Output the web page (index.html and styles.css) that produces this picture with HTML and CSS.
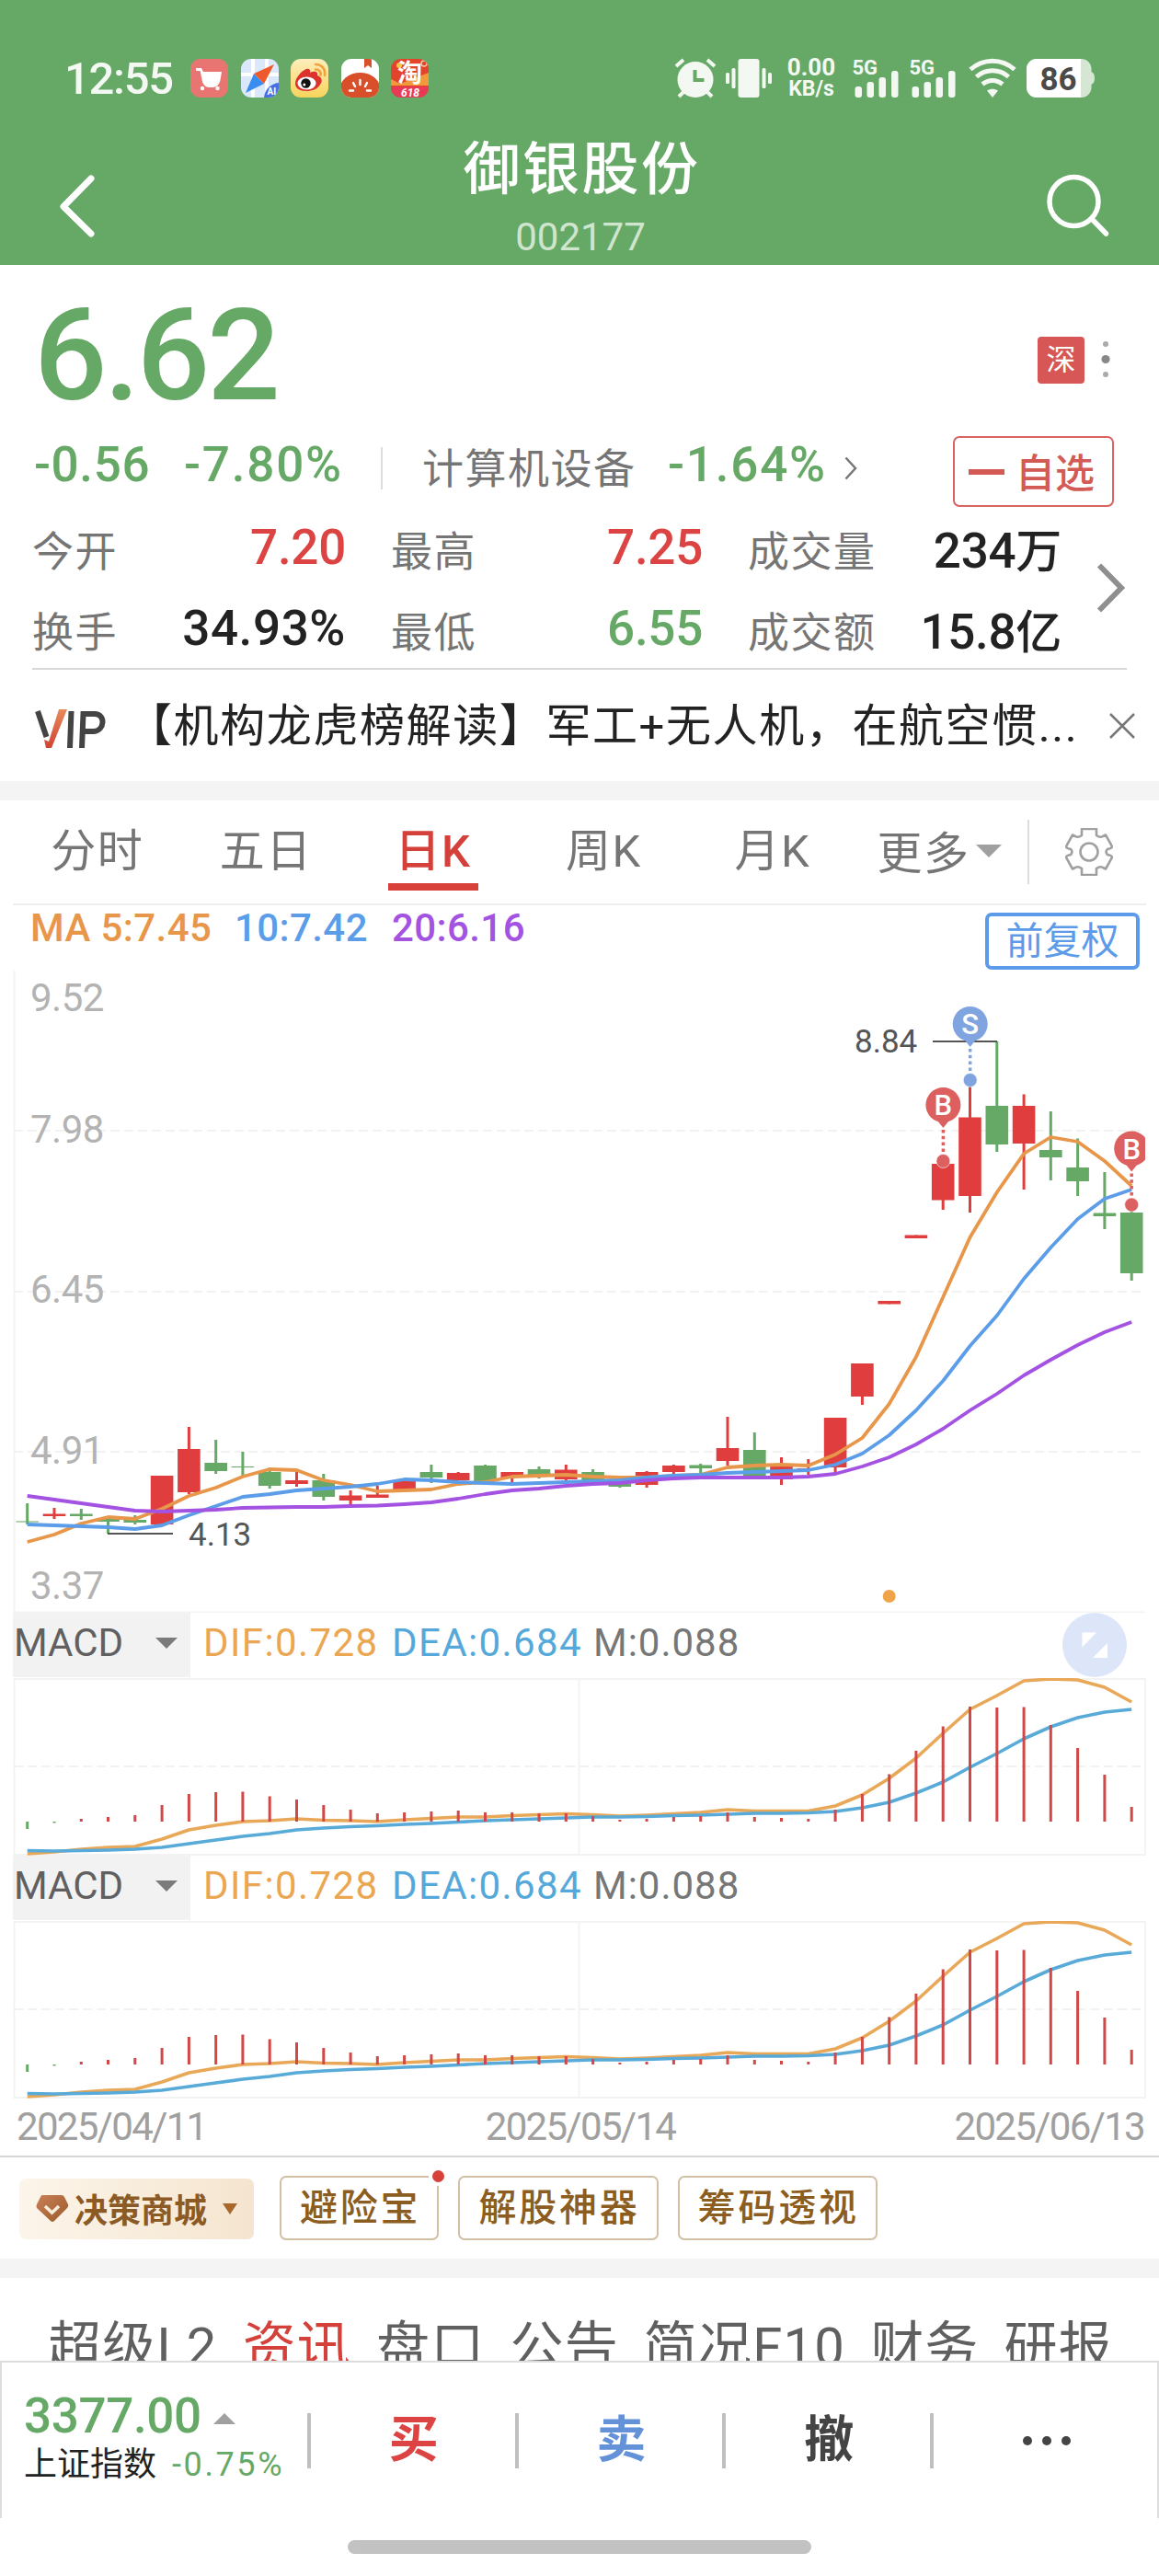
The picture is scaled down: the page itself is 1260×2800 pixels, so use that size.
FILE: index.html
```html
<!DOCTYPE html>
<html lang="zh-CN">
<head>
    <meta charset="UTF-8">
    <meta name="viewport" content="width=device-width, initial-scale=1.0">
    <title>御银股份 002177</title>
    <link rel="stylesheet" href="styles.css">
</head>
<body>

    <header class="header">
        <div class="status-bar">
            <span class="time">12:55</span>
            <div class="app-icons">
                <svg viewBox="0 0 41 42">
                    <rect width="41" height="42" rx="11" fill="#e87572"/>
                    <path d="M6 10h6l2 4h20l-1.500 9c-1 5-4 7.500-8 8h-5c-4-1-6.500-4-7-9l-2-9h-4.500z" fill="#fff"/>
                    <circle cx="13" cy="32" r="2.200" fill="#fff"/>
                    <circle cx="29.500" cy="32" r="2.200" fill="#fff"/>
                </svg>
                <svg viewBox="0 0 41 42">
                    <clipPath id="round"><rect width="41" height="42" rx="11"/></clipPath>
                    <g clip-path="url(#round)">
                        <rect width="41" height="42" fill="#dbe7fb"/>
                        <path d="M13 0v42M28 0v42M0 17h41" stroke="#fff" stroke-width="4"/>
                        <path d="M41 26v16H25c1-9 7-15 16-16z" fill="#4a6fe3"/>
                        <path d="M5 37l9-21 11 11z" fill="#3a8df0"/>
                        <path d="M36 6L14 16l11 11z" fill="#ee5a2b"/>
                    </g>
                    <text x="28.500" y="38.500" class="ai">AI</text>
                </svg>
                <svg viewBox="0 0 41 42">
                    <defs><linearGradient id="wb" x2="0" y2="1"><stop stop-color="#fdeebc"/><stop offset="1" stop-color="#f8d45c"/></linearGradient></defs>
                    <rect width="41" height="42" rx="11" fill="url(#wb)"/>
                    <path d="M5 27c0-7 7-14 12-16 3-1 5 1 4 4 4-2 9-2 8 3 5 2 6 6 3 10-3 5-9 7-15 7-7 0-12-3-12-8z" fill="#dc322d"/>
                    <ellipse cx="17.500" cy="26.500" rx="10" ry="7" fill="#fff"/>
                    <circle cx="16.500" cy="26.500" r="5.200" fill="#111"/>
                    <circle cx="14.800" cy="28" r="1.500" fill="#fff"/>
                    <path d="M27 6c7 0 11 5 10 12M27 11.500c4 0 6 2.500 5.500 6" fill="none" stroke="#f0a33c" stroke-width="2.600" stroke-linecap="round"/>
                </svg>
                <svg viewBox="0 0 41 42">
                    <g clip-path="url(#round)">
                        <rect width="41" height="42" fill="#fff"/>
                        <path d="M25 0h8v10l-4-3-4 3z" fill="#d9502e"/>
                        <ellipse cx="20.500" cy="33" rx="22" ry="18" fill="#d94f2a"/>
                        <path d="M20.500 23v5M13 26l2 4M28 26l-2 4M9 34.500h4M28 34.500h4" stroke="#fff" stroke-width="2.400" stroke-linecap="round"/>
                    </g>
                </svg>
                <svg viewBox="0 0 41 42">
                    <g clip-path="url(#round)">
                        <rect width="41" height="42" fill="#e2432c"/>
                        <path d="M0 22l10 5 31-12v14H0z" fill="#f29a3b"/>
                        <rect y="30" width="41" height="12" fill="#e83a55"/>
                        <circle cx="9" cy="7" r="3" fill="#f8c544"/>
                        <circle cx="36" cy="5" r="3" fill="none" stroke="#f7c7a5" stroke-width="1.500"/>
                    </g>
                    <text x="7" y="25" class="tao">淘</text>
                    <text x="11" y="40.500" class="six">618</text>
                </svg>
            </div>
            <div class="status-right">
                <svg class="ic-alarm" viewBox="0 0 44 42" fill="#f3f9f2">
                    <circle cx="22" cy="22.500" r="19.500"/>
                    <path d="M1 8L9 1M43 8L35 1M9 36l-5 5M35 36l5 5" stroke="#f3f9f2" stroke-width="4"/>
                    <path d="M21.500 12v11h10" fill="none" stroke="#66a866" stroke-width="4"/>
                </svg>
                <svg class="ic-vibrate" viewBox="0 0 50 42" fill="#f3f9f2">
                    <rect x="13.500" width="23" height="42" rx="3"/>
                    <rect x="6.500" y="10" width="4" height="22" rx="1.500"/>
                    <rect y="15" width="4" height="12" rx="1.500"/>
                    <rect x="39.500" y="10" width="4" height="22" rx="1.500"/>
                    <rect x="46" y="15" width="4" height="12" rx="1.500"/>
                </svg>
                <div class="net-speed"><span>0.00</span><span>KB/s</span></div>
                <svg class="ic-signal" viewBox="0 0 50 42" fill="#f3f9f2">
                    <text x="-.500" y="17">5G</text>
                    <rect x="2.500" y="30" width="7.500" height="12" rx="3"/>
                    <rect x="15.500" y="25" width="7.500" height="17" rx="3"/>
                    <rect x="28.500" y="20" width="7.500" height="22" rx="3"/>
                    <rect x="42" y="13" width="7.500" height="29" rx="3"/>
                </svg>
                <svg class="ic-signal second" viewBox="0 0 50 42" fill="#f3f9f2">
                    <text x="-.500" y="17">5G</text>
                    <rect x="2.500" y="30" width="7.500" height="12" rx="3"/>
                    <rect x="15.500" y="25" width="7.500" height="17" rx="3"/>
                    <rect x="28.500" y="20" width="7.500" height="22" rx="3"/>
                    <rect x="42" y="13" width="7.500" height="29" rx="3"/>
                </svg>
                <svg class="ic-wifi" viewBox="0 0 52 42" fill="none" stroke="#f3f9f2" stroke-width="5">
                    <path d="M2 11.500C16-1 36-1 50 11.500"/>
                    <path d="M8.500 19.500c10-9 25-9 35 0"/>
                    <path d="M15 27.500c6.500-5.500 15.500-5.500 22 0"/>
                    <path d="M20 34.500c4-2.500 8-2.500 12 0l-6 7.500z" fill="#f3f9f2" stroke="none"/>
                </svg>
                <svg class="ic-battery" viewBox="0 0 74 42">
                    <clipPath id="cell"><rect width="70.500" height="42" rx="11"/></clipPath>
                    <path d="M69 14q5 0 5 7t-5 7z" fill="#d5e7d3"/>
                    <g clip-path="url(#cell)">
                        <rect width="71" height="42" fill="#d5e7d3"/>
                        <rect width="59" height="42" fill="#fff"/>
                    </g>
                    <text x="34.500" y="33.500" text-anchor="middle">86</text>
                </svg>
            </div>
        </div>
        <div class="title-bar">
            <svg class="back" viewBox="0 0 38 68"><path d="M34 4L4 34.500 34 64" fill="none" stroke="#fff" stroke-width="7" stroke-linecap="round" stroke-linejoin="round"/></svg>
            <div class="title">
                <h1>御银股份</h1>
                <p>002177</p>
            </div>
            <svg class="search" viewBox="0 0 70 70" fill="none" stroke="#fff" stroke-width="5.500" stroke-linecap="round"><circle cx="31.500" cy="31" r="26.500"/><path d="M51 50l15.500 16"/></svg>
        </div>
    </header>

    <section class="quote">
        <div class="price-row">
            <span class="price">6.62</span>
            <span class="market">深</span>
            <svg class="dots" viewBox="0 0 10 44"><circle cx="5" cy="6" r="3" fill="#aaa"/><circle cx="5" cy="22.500" r="4.600" fill="#888"/><circle cx="5" cy="39" r="3" fill="#aaa"/></svg>
        </div>
        <div class="change-row">
            <span class="num change">-0.56</span>
            <span class="num percent">-7.80%</span>
            <span class="divider"></span>
            <span class="sector">计算机设备</span>
            <span class="num sector-change">-1.64%</span>
            <svg class="small-arrow" viewBox="0 0 14 26"><path d="M1.500 1.500L12 13 1.500 24.500" fill="none" stroke="#777" stroke-width="2.500"/></svg>
            <button class="favorite"><i></i>自选</button>
        </div>
        <div class="stats">
            <div class="stat s1"><span>今开</span><b class="up">7.20</b></div>
            <div class="stat s2"><span>最高</span><b class="up">7.25</b></div>
            <div class="stat s3"><span>成交量</span><b>234<em>万</em></b></div>
            <div class="stat s1"><span>换手</span><b class="wide">34.93%</b></div>
            <div class="stat s2"><span>最低</span><b class="down">6.55</b></div>
            <div class="stat s3"><span>成交额</span><b>15.8<em>亿</em></b></div>
            <svg class="more-arrow" viewBox="0 0 32 54"><path d="M3 2.500L27 27 3 51.500" fill="none" stroke="#8f8f8f" stroke-width="6"/></svg>
        </div>
        <div class="vip-row">
            <svg class="vip" viewBox="0 0 78 44">
                <defs><linearGradient id="vg" x2="0" y2="1"><stop stop-color="#e88a5c"/><stop offset="1" stop-color="#cf4432"/></linearGradient></defs>
                <path d="M3 3l9.500 28" fill="none" stroke="#444" stroke-width="6"/>
                <path d="M35 1h-9L15 36l-5-2 2 9h6z" fill="url(#vg)"/>
                <path d="M39.500 3L38 43M51 43l1.500-37H65c12 0 11 18-1 19H52" fill="none" stroke="#444" stroke-width="6"/>
            </svg>
            <span class="news">【机构龙虎榜解读】军工+无人机，在航空惯...</span>
            <svg class="close" viewBox="0 0 28 28"><path d="M1 1l26 26M27 1L1 27" stroke="#777" stroke-width="2.500"/></svg>
        </div>
    </section>

    <section class="kline">
        <nav class="tabs">
            <a>分时</a>
            <a>五日</a>
            <a class="active">日K</a>
            <a>周K</a>
            <a>月K</a>
            <span class="more">更多</span>
            <i class="caret"></i>
            <i class="tab-divider"></i>
            <svg class="gear" viewBox="-26 -26 52 52" fill="none" stroke="#a0a0a0" stroke-width="2.600" stroke-linejoin="round">
                <path d="M-8-25H8V-18Q12-15 15-17L18-18.500 25-6Q25-4 20-3Q17 0 20 3Q25 4 25 6L18 18.500 15 17Q12 15 8 18V25H-8V18Q-12 15-15 17L-18 18.500-25 6Q-25 4-20 3Q-17 0-20-3Q-25-4-25-6L-18-18.500-15-17Q-12-15-8-18Z"/>
                <circle r="9.500"/>
            </svg>
        </nav>
        <div class="ma-row">
            <span class="ma5">MA 5:7.45</span>
            <span class="ma10">10:7.42</span>
            <span class="ma20">20:6.16</span>
            <button class="adjust">前复权</button>
        </div>
        <svg class="chart" id="candles" viewBox="0 1055 1260 698"></svg>

        <div class="macd-head">
            <div class="picker">MACD<i></i></div>
            <span class="dif">DIF:0.728</span>
            <span class="dea">DEA:0.684</span>
            <span class="m">M:0.088</span>
            <svg class="expand" viewBox="0 0 70 70"><circle cx="35" cy="35" r="35" fill="#dde6f8"/><path d="M21.500 21.500H37L21.500 37.500zM49 33v16H33z" fill="#fff"/></svg>
        </div>
        <svg class="macd" viewBox="0 1824 1260 193"></svg>
        <div class="macd-head">
            <div class="picker">MACD<i></i></div>
            <span class="dif">DIF:0.728</span>
            <span class="dea">DEA:0.684</span>
            <span class="m">M:0.088</span>
        </div>
        <svg class="macd" viewBox="0 1824 1260 193"></svg>

        <div class="dates">
            <span>2025/04/11</span>
            <span>2025/05/14</span>
            <span>2025/06/13</span>
        </div>
    </section>

    <section class="tools">
        <div class="shop">
            <svg viewBox="0 0 36 30">
                <defs><linearGradient id="gem" x2="1" y2="1"><stop stop-color="#c98058"/><stop offset="1" stop-color="#9a5a28"/></linearGradient></defs>
                <path d="M7 0h21q2 0 3 2l4 8q1 2-1 4L20 28q-2 2-4 0L1 14q-1-2 0-4l4-8q1-2 2-2z" fill="url(#gem)"/>
                <path d="M10 12l7.500 7 7.500-7" fill="none" stroke="#f8ecdc" stroke-width="3.500"/>
            </svg>
            <span>决策商城</span>
            <i></i>
        </div>
        <div class="tool">避险宝<i class="dot"></i></div>
        <div class="tool">解股神器</div>
        <div class="tool">筹码透视</div>
    </section>

    <nav class="info-tabs">
        <a>超级L2</a>
        <a class="active">资讯</a>
        <a>盘口</a>
        <a>公告</a>
        <a>简况F10</a>
        <a>财务</a>
        <a>研报</a>
    </nav>

    <footer class="trade-bar">
        <div class="index">
            <div class="index-value">3377.00<i></i></div>
            <div class="index-name">上证指数<span>-0.75%</span></div>
        </div>
        <a class="buy">买</a>
        <a class="sell">卖</a>
        <a class="cancel">撤</a>
        <a class="others"><i></i><i></i><i></i></a>
    </footer>
    <div class="home"></div>

    <script>
        const RED = '#e03e3e';
        const GREEN = '#66a866';
        const xAt = i => 29.7 + i * 29.28;

        // [up, high, top, bottom, low]
        const candles = [
            [0, 1634, 1653.5, 1654.5, 1657], [1, 1639, 1645.5, 1648, 1651], [0, 1640, 1645.5, 1648, 1652],
            [0, 1650, 1650.5, 1654, 1667], [0, 1647, 1652, 1655, 1657], [1, 1604, 1604, 1657, 1657],
            [1, 1551, 1575, 1622, 1624], [0, 1565, 1590, 1599, 1602], [0, 1578, 1594, 1595, 1604],
            [0, 1595, 1600, 1615, 1618], [1, 1599, 1609, 1613, 1616], [0, 1602, 1609, 1627, 1631],
            [1, 1620, 1625.5, 1631, 1636], [1, 1615, 1624.5, 1628, 1628], [1, 1609.5, 1609.5, 1619, 1619],
            [0, 1592, 1600, 1606, 1612], [1, 1600, 1601, 1609, 1609], [0, 1592, 1593, 1610, 1610],
            [1, 1600, 1600, 1606, 1613], [0, 1594, 1597, 1605, 1607], [1, 1592, 1597.5, 1608, 1611],
            [0, 1597, 1600, 1611, 1611], [0, 1611, 1613, 1616, 1617], [1, 1599, 1600, 1614, 1617],
            [1, 1592, 1593, 1600, 1603], [0, 1591, 1592.5, 1596, 1603], [1, 1540, 1574, 1588, 1593],
            [0, 1557, 1576, 1604, 1604], [1, 1584, 1594, 1608, 1614], [1, 1586, 1596, 1597, 1603],
            [1, 1541, 1541, 1595, 1602], [1, 1482, 1482, 1518, 1527], [1, 1414, 1414, 1417.5, 1417.5],
            [1, 1342.5, 1342.5, 1346, 1346], [1, 1265, 1265, 1304.5, 1315], [1, 1178, 1214.5, 1300, 1318],
            [0, 1132, 1202, 1244, 1252], [1, 1189.5, 1202, 1243, 1293], [0, 1208, 1250, 1258, 1283],
            [0, 1237.5, 1269, 1284, 1300], [0, 1274, 1318.5, 1322, 1336], [0, 1316, 1318, 1384, 1392]
        ];
        const ma5 = [1676, 1668, 1656, 1649, 1651, 1640, 1626, 1617, 1605, 1597, 1598, 1609, 1614, 1621, 1620, 1619, 1613, 1611, 1605, 1604, 1603, 1605, 1606, 1606, 1604, 1603, 1595, 1593, 1592, 1593, 1581, 1563, 1526, 1475, 1410, 1345, 1296, 1254, 1236, 1241, 1262, 1289];
        const ma10 = [1657, 1658, 1659, 1660, 1662, 1658, 1647, 1637, 1627, 1624, 1620, 1618, 1616, 1613, 1608, 1609, 1611, 1612, 1613, 1612, 1611, 1610, 1609, 1606, 1604, 1603, 1601, 1600, 1599, 1598, 1592, 1580, 1560, 1533, 1501, 1463, 1430, 1390, 1356, 1325, 1303, 1293];
        const ma20 = [1626, 1630, 1634, 1638, 1642, 1643, 1642, 1641, 1639, 1638.5, 1638, 1638, 1637, 1636.5, 1635, 1633, 1629, 1624, 1620, 1618, 1615, 1613, 1612, 1609, 1607, 1606, 1606, 1606, 1606, 1605, 1602, 1594, 1584, 1570, 1553, 1533, 1515, 1495, 1478, 1462, 1448, 1437];

        const dif = [2015, 2013, 2010, 2008, 2007, 1999, 1989, 1984, 1980, 1979, 1977, 1978.5, 1979, 1980, 1978, 1976.5, 1975, 1975, 1973.5, 1972.5, 1971.5, 1972.5, 1974, 1973, 1971.5, 1970, 1967, 1968.5, 1968.5, 1968.5, 1963, 1951, 1933, 1911, 1884, 1858, 1843, 1827, 1825, 1826, 1834, 1850];
        const dea = [2011.5, 2012, 2011.5, 2011, 2010, 2008, 2004, 2000, 1996, 1993, 1989, 1987, 1985.5, 1984.5, 1983, 1982, 1980.5, 1979, 1978, 1977, 1976, 1975, 1975, 1974.5, 1973.5, 1973, 1972, 1971, 1971, 1970.5, 1969, 1965, 1959, 1949, 1937, 1921, 1906, 1890, 1877, 1867, 1861, 1858];
        const bars = [1988, 1981.5, 1977, 1975, 1973, 1962, 1950, 1948, 1947.5, 1952.5, 1956, 1962, 1967, 1971, 1970, 1969, 1968, 1970, 1970, 1971, 1971, 1974, 1978, 1977, 1975, 1974, 1970, 1975, 1976, 1977, 1967, 1950, 1928.5, 1903, 1876.5, 1855, 1856, 1855.5, 1875, 1900, 1929, 1964];

        function line(values, color, width) {
            const points = values.map((y, i) => xAt(i).toFixed(1) + ',' + y).join(' ');
            return `<polyline points="${points}" fill="none" stroke="${color}" stroke-width="${width}" stroke-linejoin="round"/>`;
        }

        function grid(y) {
            return `<path d="M15 ${y}H1241" stroke="#eee" stroke-width="1.5" stroke-dasharray="10 5"/>`;
        }

        function marker(letter, x, y, endY, color) {
            return `<g fill="${color}">
                <circle cx="${x}" cy="${y}" r="19"/>
                <path d="M${x - 8} ${y + 15}L${x} ${y + 25}L${x + 8} ${y + 15}z"/>
                <path d="M${x} ${y + 27}V${endY - 8}" stroke="${color}" stroke-width="3.5" stroke-dasharray="3.5 3.3"/>
                <circle cx="${x}" cy="${endY}" r="7.5" stroke="#fff" stroke-opacity=".6"/>
                <text x="${x}" y="${y + 11}" class="mark">${letter}</text>
            </g>`;
        }

        let html = '<path d="M15.500 1055V1752.500H1245" fill="none" stroke="#f4f4f4" stroke-width="2"/>';
        html += grid(1229) + grid(1404) + grid(1578);
        [[9.52, 1099], [7.98, 1242], [6.45, 1416], [4.91, 1591], [3.37, 1738]].forEach(([label, y]) => {
            html += `<text x="33" y="${y}" class="axis">${label}</text>`;
        });
        candles.forEach(([up, high, top, bottom, low], i) => {
            const x = xAt(i);
            const color = up ? RED : GREEN;
            html += `<rect x="${(x - 1.5).toFixed(1)}" y="${high}" width="3" height="${low - high}" fill="${color}"/>`;
            html += `<rect x="${(x - 12.3).toFixed(1)}" y="${top}" width="24.6" height="${bottom - top}" fill="${color}"/>`;
        });
        html += line(ma5, '#e8964a', 3.8) + line(ma10, '#5b9de8', 3.8) + line(ma20, '#a352e2', 3.8);
        html += '<path d="M1014 1132h70M117 1667h71" stroke="#555" stroke-width="2"/>';
        html += '<text x="929" y="1144" class="note">8.84</text><text x="205" y="1680" class="note">4.13</text>';
        html += marker('S', 1054.7, 1113, 1174, '#7fa4e0');
        html += marker('B', 1025.4, 1201, 1262, '#dd6060');
        html += '<clipPath id="edge"><path d="M0 1055h1245v698H0z"/></clipPath>';
        html += '<g clip-path="url(#edge)">' + marker('B', 1230.2, 1248.5, 1309.5, '#dd6060') + '</g>';
        html += '<circle cx="966.7" cy="1735" r="7" fill="#f0a44a"/>';
        document.getElementById('candles').innerHTML = html;

        let macd = '<path d="M15.500 1825H1245V2016H15.500zM629.500 1825V2016" fill="none" stroke="#f3f3f3" stroke-width="2"/>' + grid(1920);
        macd += line(dif, '#e8a858', 3.6) + line(dea, '#58aad8', 3.6);
        bars.forEach((y, i) => {
            const top = Math.min(y, 1980);
            macd += `<rect x="${(xAt(i) - 1.5).toFixed(1)}" y="${top}" width="3" height="${Math.abs(1980 - y)}" fill="${y > 1980 ? GREEN : '#d04848'}"/>`;
        });
        document.querySelectorAll('.macd').forEach(svg => {
            svg.innerHTML = macd;
        });
    </script>
</body>
</html>
```

FILE: styles.css
```css
* {
    box-sizing: border-box;
}
body {
    width: 1260px;
    height: 2800px;
    margin: 0;
    overflow: hidden;
    background: #fff;
    color: #222;
    font-family: Roboto, "Noto Sans CJK SC", sans-serif;
}
svg {
    display: block;
    flex: none;
}
i, em {
    font-style: normal;
}
span, a {
    white-space: nowrap;
}


.header {
    height: 288px;
    background: #66a866;
    color: #fff;
}
.status-bar {
    display: flex;
    height: 130px;
    padding: 64px 70px 0 70px;
}
.status-bar svg {
    overflow: visible;
}
.time {
    width: 137px;
    color: #f3f9f2;
    font-size: 49px;
    font-weight: 500;
    line-height: 44px;
    letter-spacing: -1.300px;
}
.app-icons {
    display: flex;
    gap: 13.5px;
}
.app-icons svg {
    width: 41px;
    height: 42px;
}
.ai {
    font-size: 10px;
    font-weight: 700;
    fill: #fff;
}
.tao {
    font-size: 27px;
    font-weight: 700;
    fill: #fff;
}
.six {
    font-size: 12px;
    font-weight: 700;
    font-style: italic;
    fill: #fff;
}
.status-right {
    display: flex;
    height: 42px;
    margin-left: auto;
}
.ic-alarm {
    width: 44px;
}
.ic-vibrate {
    width: 50px;
    margin-left: 11px;
}
.net-speed {
    display: flex;
    flex-direction: column;
    align-items: center;
    justify-content: space-between;
    width: 56px;
    margin: -3px 0 -3px 15px;
    color: #f3f9f2;
    font-size: 26px;
    font-weight: 700;
    line-height: 24px;
}
.net-speed span + span {
    font-size: 23px;
}
.ic-signal {
    width: 50px;
    margin-left: 17px;
}
.ic-signal.second {
    margin-left: 12px;
}
.ic-signal text {
    font-size: 22px;
    font-weight: 700;
}
.ic-wifi {
    width: 52px;
    margin-left: 14px;
}
.ic-battery {
    width: 74px;
    margin-left: 11px;
}
.ic-battery text {
    font-size: 35px;
    font-weight: 700;
    fill: #4a4a4a;
}
.title-bar {
    display: flex;
    height: 158px;
    padding: 0 54px 0 65px;
}
.back {
    width: 38px;
    height: 68px;
    margin-top: 60px;
}
.title {
    width: 258px;
    margin-left: 399px;
    text-align: center;
}
.title h1 {
    margin: 17px -3px 0 0;
    font-size: 62px;
    font-weight: 500;
    line-height: 76px;
    letter-spacing: 2.500px;
}
.title p {
    margin: 14px 0 0;
    color: #cfe5ce;
    font-size: 42px;
    line-height: 42px;
}
.search {
    width: 70px;
    height: 70px;
    margin: 58px 0 0 auto;
}


.quote {
    height: 561px;
}
.price-row {
    display: flex;
    align-items: center;
    height: 180px;
    padding: 24px 53px 0 37px;
}
.price {
    margin-top: -8px;
    color: #66a866;
    font-size: 140px;
    font-weight: 500;
    line-height: 140px;
    letter-spacing: -3.300px;
}
.market {
    width: 51px;
    height: 51px;
    margin: 2px 0 0 auto;
    border-radius: 4px;
    background: #d65755;
    color: #fff;
    font-size: 32px;
    line-height: 51px;
    text-align: center;
}
.dots {
    width: 10px;
    height: 44px;
    margin-left: 18px;
}
.change-row {
    display: flex;
    align-items: center;
    height: 82px;
    padding: 0 49px 0 37px;
}
.num {
    margin-bottom: 8px;
    color: #66a866;
    font-size: 53px;
    font-weight: 500;
    line-height: 60px;
}
.change {
    width: 163px;
    letter-spacing: .600px;
}
.percent {
    width: 214px;
    letter-spacing: 1.800px;
}
.divider {
    width: 2px;
    height: 46px;
    background: #ddd;
}
.sector {
    width: 267px;
    margin: -5px 0 0 43px;
    color: #757575;
    font-size: 45px;
    letter-spacing: 1.500px;
}
.sector-change {
    width: 192px;
    letter-spacing: 1.800px;
}
.small-arrow {
    width: 14px;
    height: 26px;
}
.favorite {
    display: flex;
    align-items: center;
    width: 175px;
    height: 77px;
    margin: 7px 0 0 auto;
    padding: 0 0 4px 15px;
    border: 2px solid #d86361;
    border-radius: 7px;
    background: #fff;
    color: #d45a56;
    font-family: inherit;
    font-size: 43px;
    font-weight: 500;
}
.favorite i {
    width: 39px;
    height: 6px;
    margin: 5px 12px 0 0;
    background: #d45a56;
}
.stats {
    position: relative;
    display: grid;
    grid-template-columns: 390px 388px 341px;
    grid-template-rows: 90px 86px;
    width: 1190px;
    height: 178px;
    margin-left: 35px;
    border-bottom: 2px solid #d8d8d8;
}
.stat {
    display: flex;
    align-items: center;
    justify-content: space-between;
    font-size: 53px;
}
.s1 {
    padding-right: 49px;
}
.s2 {
    padding-right: 49px;
}
.stat span {
    margin-top: 3px;
    color: #757575;
    font-size: 45px;
    letter-spacing: 1.500px;
}
.stat b {
    font-weight: 500;
    letter-spacing: -.300px;
}
.stat .wide {
    letter-spacing: .600px;
}
.stat em {
    font-size: 50px;
    font-weight: 500;
}
.stat .up {
    color: #dc4444;
}
.stat .down {
    color: #66a866;
}
.more-arrow {
    position: absolute;
    top: 62px;
    right: 1px;
    width: 32px;
    height: 54px;
}
.vip-row {
    display: flex;
    align-items: center;
    height: 121px;
    padding: 0 26px 0 38px;
}
.vip {
    width: 78px;
    height: 44px;
    margin-top: 6px;
}
.news {
    margin: 2px 0 0 22px;
    font-size: 49px;
    line-height: 60px;
    letter-spacing: 1.600px;
}
.close {
    width: 28px;
    height: 28px;
    margin-left: auto;
}


.kline {
    border-top: 21px solid #f4f4f4;
}
.tabs {
    display: flex;
    align-items: center;
    height: 114px;
    margin: 0 14px;
    border-bottom: 2px solid #eee;
    color: #757575;
    font-size: 49px;
    letter-spacing: 1.500px;
}
.tabs a {
    display: flex;
    justify-content: center;
    width: 183.500px;
    line-height: 112px;
}
.tabs .active {
    align-self: flex-start;
    width: 98px;
    height: 98px;
    margin: 0 44.500px 0 41px;
    border-bottom: 8px solid #d8403a;
    color: #d4403a;
    font-weight: 500;
}
.tabs .more {
    margin: -5px 0 0 22px;
}
.caret {
    margin: -2px 28px 0 6px;
    border: 14px solid transparent;
    border-top-color: #a0a0a0;
    border-bottom: 0;
}
.tab-divider {
    width: 2px;
    height: 70px;
    background: #ddd;
}
.gear {
    width: 52px;
    height: 52px;
    margin-left: 39px;
}
.ma-row {
    display: flex;
    height: 71px;
    padding: 9px 21px 0 33px;
    font-size: 42px;
    font-weight: 500;
    line-height: 32px;
    letter-spacing: .400px;
}
.ma5 {
    width: 222px;
    color: #e8964a;
}
.ma10 {
    width: 171px;
    color: #5b9de8;
}
.ma20 {
    color: #a352e2;
}
.adjust {
    width: 168px;
    height: 62px;
    margin: -1px 0 0 auto;
    padding: 0;
    border: 4px solid #5b9bea;
    border-radius: 7px;
    background: #fff;
    color: #5b9bea;
    font-family: inherit;
    font-size: 41px;
    line-height: 55px;
}
.chart {
    width: 1260px;
    height: 698px;
}
.axis {
    font-size: 42px;
    fill: #b3b3b3;
    letter-spacing: -.500px;
}
.note {
    font-size: 35px;
    fill: #555;
}
.mark {
    font-size: 31px;
    font-weight: 500;
    text-anchor: middle;
    fill: #fff;
}


.macd-head {
    display: flex;
    height: 71px;
    padding: 0 35px 0 14px;
    font-size: 42px;
    line-height: 65px;
    letter-spacing: 1.400px;
}
.picker {
    display: flex;
    justify-content: space-between;
    align-items: center;
    width: 193px;
    height: 70px;
    padding: 0 14px 5px 1px;
    background: #f2f2f2;
    color: #606060;
    letter-spacing: 0;
}
.picker i {
    border: 12px solid transparent;
    border-top-color: #7b7b7b;
    border-bottom: 0;
}
.dif {
    width: 205px;
    margin-left: 14px;
    color: #eba652;
}
.dea {
    width: 219px;
    color: #55a9da;
}
.m {
    color: #777;
    letter-spacing: 1px;
}
.expand {
    width: 70px;
    height: 70px;
    margin-left: auto;
}
.macd {
    width: 1260px;
    height: 193px;
}
.dates {
    display: flex;
    justify-content: space-between;
    height: 64px;
    padding: 0 16px 0 18px;
    border-bottom: 2px solid #d4d4d4;
    color: #a0a0a0;
    font-size: 42px;
    line-height: 61px;
    letter-spacing: -1.700px;
}


.tools {
    display: flex;
    align-items: center;
    gap: 21px;
    height: 110px;
    padding-left: 21px;
}
.shop {
    display: flex;
    align-items: center;
    width: 255px;
    height: 66px;
    margin: 2px 7px 0 0;
    padding-left: 18px;
    border-radius: 7px;
    background: linear-gradient(90deg, #fcf5ea, #f5e5cf);
    color: #8c5a24;
    font-size: 36px;
    font-weight: 700;
}
.shop svg {
    width: 36px;
    height: 30px;
    margin-right: 7px;
}
.shop span {
    margin: -3px -1px 0 -1px;
}
.shop i {
    margin-left: 18px;
    border: 8px solid transparent;
    border-top: 12px solid #a8682c;
    border-bottom: 0;
}
.tool {
    position: relative;
    height: 70px;
    padding: 0 18px 0 20px;
    border: 2px solid #d3bfa2;
    border-radius: 7px;
    color: #8c5d20;
    font-size: 41px;
    font-weight: 500;
    line-height: 66px;
    letter-spacing: 2.800px;
}
.dot {
    position: absolute;
    top: -12px;
    right: -12px;
    width: 21px;
    height: 21px;
    border: 4px solid #fff;
    border-radius: 50%;
    background: #d8403a;
}
.info-tabs {
    display: flex;
    gap: 27px;
    height: 111px;
    padding: 41px 0 0 52px;
    border-top: 21px solid #f4f4f4;
    overflow: hidden;
    color: #606060;
    font-size: 58px;
    line-height: 68px;
    letter-spacing: 1.200px;
}
.info-tabs .active {
    color: #d4403a;
}


.trade-bar {
    position: relative;
    display: flex;
    align-items: center;
    height: 171px;
    border: 2px solid #ddd;
    border-bottom: 0;
    background: #fff;
}
.index {
    width: 332px;
    padding: 0 0 4px 24px;
}
.index-value {
    display: flex;
    align-items: center;
    color: #66a866;
    font-size: 53px;
    font-weight: 500;
    line-height: 56px;
    letter-spacing: -.400px;
}
.index-value i {
    margin: 6px 0 0 13px;
    border: 12px solid transparent;
    border-bottom-color: #a0a0a0;
    border-top: 0;
}
.index-name {
    display: flex;
    font-size: 36px;
    line-height: 50px;
}
.index-name span {
    margin-left: 17px;
    color: #66a866;
    letter-spacing: 2.600px;
}
.trade-bar a {
    display: flex;
    align-items: center;
    justify-content: center;
    width: 225.700px;
    height: 60px;
    padding-left: 2px;
    border-left: 4px solid #bfbfbf;
    font-size: 54px;
    font-weight: 700;
    line-height: 56px;
}
.trade-bar .buy {
    color: #dc4444;
}
.trade-bar .sell {
    color: #6492d8;
}
.trade-bar .cancel {
    color: #444;
}
.trade-bar .others {
    flex: 1;
    gap: 11px;
}
.others i {
    width: 10px;
    height: 10px;
    border-radius: 50%;
    background: #444;
}
.home {
    width: 504px;
    height: 15px;
    margin: 24px auto 0;
    border-radius: 8px;
    background: #c2c2c2;
}
```
